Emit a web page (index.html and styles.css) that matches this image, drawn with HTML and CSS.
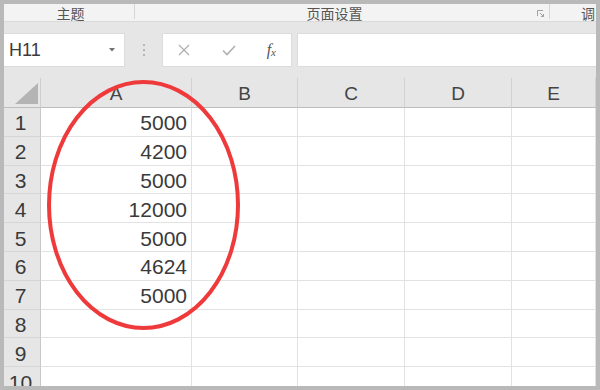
FILE: index.html
```html
<!DOCTYPE html>
<html lang="zh">
<head>
    <meta charset="UTF-8">
    <title>工作表</title>
    <link rel="stylesheet" href="styles.css">
</head>
<body>
    <div class="frame">
        <div class="ribbon">
            <div class="group group-theme">主题</div>
            <div class="group group-page">
                <span class="group-title">页面设置</span>
                <span class="launcher">
                    <svg width="7" height="7" viewBox="0 0 7 7"><path d="M0.5 6V0.5H6" fill="none" stroke="#a0a0a0"/><path d="M3 3L6.5 6.5M6.5 4v2.5H4" fill="none" stroke="#a0a0a0"/></svg>
                </span>
            </div>
            <div class="group group-more">调</div>
        </div>

        <div class="formula-row">
            <div class="namebox">
                <span>H11</span>
                <svg class="caret" width="6" height="4" viewBox="0 0 6 4"><path d="M0 0h6L3 3.5z" fill="#707070"/></svg>
            </div>
            <div class="grip"><i></i><i></i><i></i></div>
            <div class="fx-buttons">
                <svg width="14" height="14" viewBox="0 0 14 14"><path d="M2 2l10 10M12 2L2 12" stroke="#b0b0b0" stroke-width="1.3"/></svg>
                <svg width="16" height="14" viewBox="0 0 16 14"><path d="M2 7.5l4 4L14 3" fill="none" stroke="#b0b0b0" stroke-width="1.6"/></svg>
                <span class="fx">f<sub>x</sub></span>
            </div>
            <div class="formula-input"></div>
        </div>

        <div class="sheet">
            <div class="corner"><span class="corner-tri"></span></div>
            <div class="col-head">A</div>
            <div class="col-head">B</div>
            <div class="col-head">C</div>
            <div class="col-head">D</div>
            <div class="col-head">E</div>

            <div class="row-head">1</div><div class="cell num">5000</div><div class="cell"></div><div class="cell"></div><div class="cell"></div><div class="cell"></div>
            <div class="row-head">2</div><div class="cell num">4200</div><div class="cell"></div><div class="cell"></div><div class="cell"></div><div class="cell"></div>
            <div class="row-head">3</div><div class="cell num">5000</div><div class="cell"></div><div class="cell"></div><div class="cell"></div><div class="cell"></div>
            <div class="row-head">4</div><div class="cell num">12000</div><div class="cell"></div><div class="cell"></div><div class="cell"></div><div class="cell"></div>
            <div class="row-head">5</div><div class="cell num">5000</div><div class="cell"></div><div class="cell"></div><div class="cell"></div><div class="cell"></div>
            <div class="row-head">6</div><div class="cell num">4624</div><div class="cell"></div><div class="cell"></div><div class="cell"></div><div class="cell"></div>
            <div class="row-head">7</div><div class="cell num">5000</div><div class="cell"></div><div class="cell"></div><div class="cell"></div><div class="cell"></div>
            <div class="row-head">8</div><div class="cell"></div><div class="cell"></div><div class="cell"></div><div class="cell"></div><div class="cell"></div>
            <div class="row-head">9</div><div class="cell"></div><div class="cell"></div><div class="cell"></div><div class="cell"></div><div class="cell"></div>
            <div class="row-head">10</div><div class="cell"></div><div class="cell"></div><div class="cell"></div><div class="cell"></div><div class="cell"></div>
        </div>

        <!-- marca roja sobre la columna A -->
        <svg class="mark" width="592" height="382" viewBox="0 0 592 382">
            <ellipse cx="139.5" cy="201" rx="94.5" ry="123" fill="none" stroke="#ef3a3c" stroke-width="4"/>
        </svg>
    </div>
</body>
</html>
```

FILE: styles.css
```css
* {
    box-sizing: border-box;
}
body {
    margin: 0;
    background: #b9b9b9;
    font-family: "Liberation Sans", "Noto Sans CJK SC", sans-serif;
}
.frame {
    position: relative;
    margin: 4px;
    width: 592px;
    height: 382px;
    overflow: hidden;
    background: #e6e6e6;
}

/* ribbon */
.ribbon {
    display: flex;
    height: 18px;
    background: #f3f3f3;
    border-bottom: 1px solid #dadada;
    font-family: "Noto Sans CJK SC", sans-serif;
    font-size: 14px;
    line-height: 16px;
    color: #555;
}
.group {
    display: flex;
    align-items: center;
}
.group-theme {
    width: 131px;
    justify-content: center;
    padding-left: 2px;
    position: relative;
}
.group-theme::after,
.group-page::after {
    content: "";
    position: absolute;
    right: 0;
    top: 0;
    height: 15px;
    border-right: 1px solid #d6d6d6;
}
.group-page {
    position: relative;
    width: 415px;
}
.group-title {
    flex: 1;
    text-align: center;
    padding-left: 4px;
}
.launcher {
    width: 20px;
    display: flex;
    justify-content: center;
    padding-top: 2px;
}
.group-more {
    flex: 1;
    justify-content: flex-end;
    padding-right: 1px;
}

/* formula bar */
.formula-row {
    display: flex;
    height: 34px;
    margin-top: 11px;
}
.namebox {
    width: 121px;
    background: #fff;
    border: 1px solid #dcdcdc;
    border-left: none;
    display: flex;
    align-items: center;
    justify-content: space-between;
    padding: 0 9px 0 5px;
    font-size: 18px;
    color: #3a3a3a;
}
.grip {
    width: 37px;
    display: flex;
    flex-direction: column;
    align-items: center;
    justify-content: center;
    gap: 3px;
}
.grip i {
    width: 2px;
    height: 2px;
    background: #b5b5b5;
}
.fx-buttons {
    width: 130px;
    background: #fff;
    border: 1px solid #dcdcdc;
    display: flex;
    align-items: center;
    justify-content: space-between;
    padding: 0 15px 0 14px;
}
.fx {
    font-family: "Liberation Serif", serif;
    font-style: italic;
    font-size: 16px;
    color: #555;
}
.fx sub {
    font-size: 11px;
    vertical-align: -1px;
}
.formula-input {
    flex: 1;
    margin-left: 5px;
    background: #fff;
    border: 1px solid #dcdcdc;
    border-right: none;
}

/* sheet grid */
.sheet {
    display: grid;
    grid-template-columns: 37px 151px 106px 107px 107px 1fr;
    grid-template-rows: 30px;
    grid-auto-rows: 28.8px;
    margin-top: 11px;
    color: #3a3a3a;
    font-size: 21px;
}
.corner {
    position: relative;
    border-right: 1px solid #cfcfcf;
    border-bottom: 1px solid #bdbdbd;
}
.corner-tri {
    position: absolute;
    right: 2px;
    bottom: 3px;
    width: 0;
    height: 0;
    border-left: 23px solid transparent;
    border-bottom: 21px solid #b4b4b4;
}
.col-head {
    border-right: 1px solid #d2d2d2;
    border-bottom: 1px solid #bdbdbd;
    display: flex;
    align-items: center;
    justify-content: center;
    font-size: 19px;
    padding-top: 3px;
    color: #444;
}
.row-head {
    background: #e6e6e6;
    border-right: 1px solid #c9c9c9;
    border-bottom: 1px solid #d6d6d6;
    display: flex;
    align-items: center;
    justify-content: center;
    padding: 3px 3px 0 0;
}
.cell {
    background: #fff;
    border-right: 1px solid #e2e2e2;
    border-bottom: 1px solid #e2e2e2;
}
.num {
    display: flex;
    align-items: center;
    justify-content: flex-end;
    padding: 3px 4px 0 0;
}

.mark {
    position: absolute;
    left: 0;
    top: 0;
    pointer-events: none;
}
```
